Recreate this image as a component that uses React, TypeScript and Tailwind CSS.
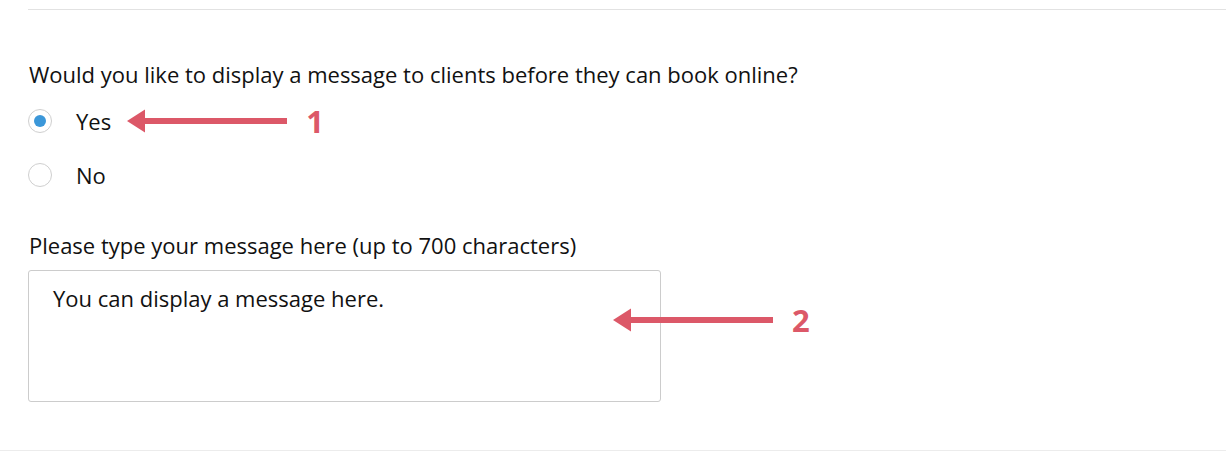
import React from "react";

function Arrow({ width }: { width: number }) {
  return (
    <svg width={width} height="24" viewBox={`0 0 ${width} 24`} className="block">
      <polygon points="0,12 18,0.5 18,23.5" fill="#dc5868" />
      <rect x="16" y="9" width={width - 16} height="6" fill="#dc5868" />
    </svg>
  );
}

export default function App() {
  return (
    <div
      className="w-[1226px] h-[452px] bg-white overflow-hidden text-[#111]"
      style={{ fontFamily: '"Open Sans", sans-serif' }}
    >
      <div className="ml-[28px] h-[10px] border-b border-[#e2e2e2]" />
      <div className="pl-[29px] pt-[49px]">
        <p className="text-[22px] leading-[30px] h-[30px]">
          Would you like to display a message to clients before they can book online?
        </p>
        <div className="mt-[17px] flex items-center h-[30px]">
          <span className="ml-[-1px] w-[24px] h-[24px] rounded-full border border-[#cfcfcf] flex items-center justify-center">
            <span className="w-[12px] h-[12px] rounded-full bg-[#3b97d9]" />
          </span>
          <span className="ml-[24px] text-[22px] leading-[30px]">Yes</span>
          <span className="ml-[16px]">
            <Arrow width={160} />
          </span>
          <span className="ml-[19px] text-[31px] font-bold text-[#dc5868] leading-none">1</span>
        </div>
        <div className="mt-[24px] flex items-center h-[30px]">
          <span className="ml-[-1px] w-[24px] h-[24px] rounded-full border border-[#cfcfcf]" />
          <span className="ml-[24px] text-[22px] leading-[30px]">No</span>
        </div>
        <p className="mt-[40px] text-[22px] leading-[30px] h-[30px]">
          Please type your message here (up to 700 characters)
        </p>
        <div className="mt-[10px] flex items-center">
          <div className="ml-[-1px] w-[633px] h-[132px] rounded-[3px] border border-[#cccccc] pl-[24px] pt-[12px] text-[22px] leading-[30px]">
            You can display a message here.
          </div>
          <span className="ml-[-48px] mt-[-32px]">
            <Arrow width={160} />
          </span>
          <span className="ml-[19px] mt-[-32px] text-[31px] font-bold text-[#dc5868] leading-none">2</span>
        </div>
      </div>
      <div className="mt-[48px] border-b border-[#ececec]" />
    </div>
  );
}
